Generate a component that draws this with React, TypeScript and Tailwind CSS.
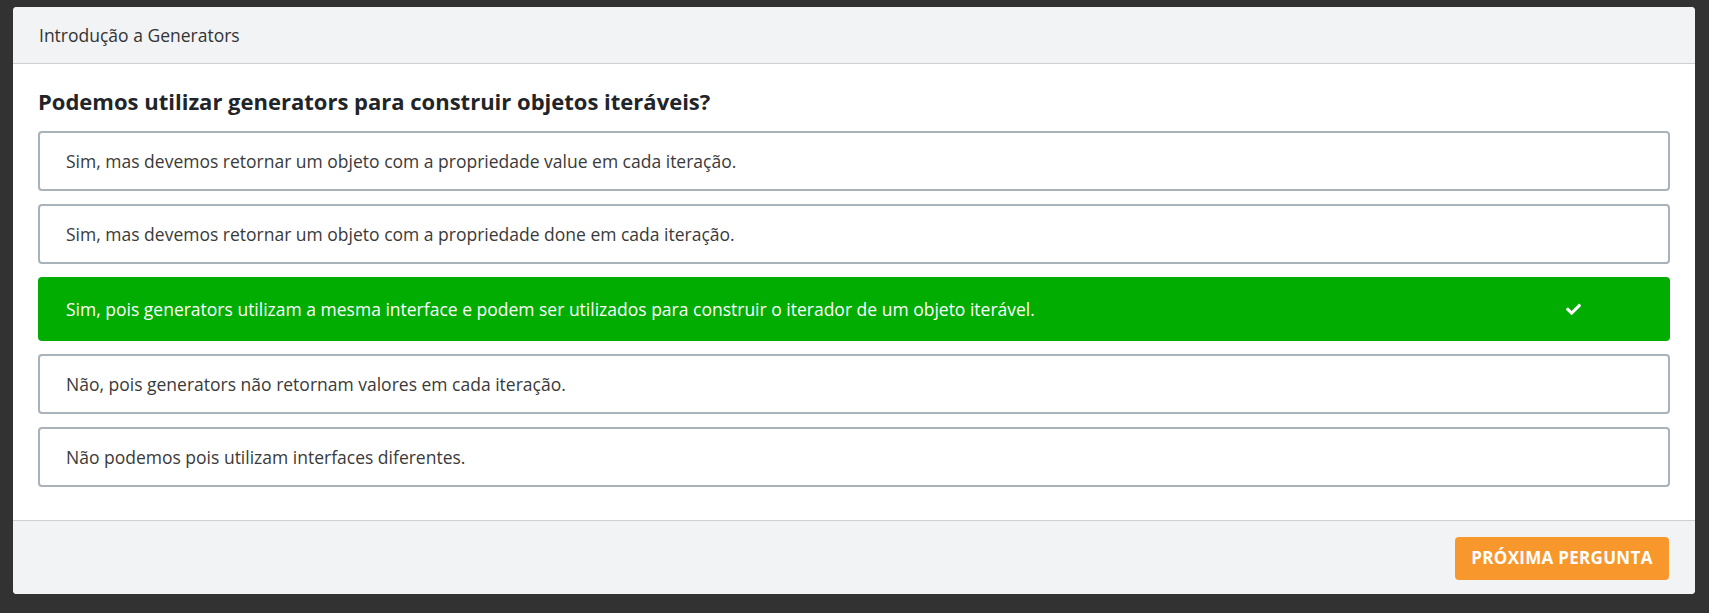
import React from "react";

const options = [
  { text: "Sim, mas devemos retornar um objeto com a propriedade value em cada iteração.", correct: false },
  { text: "Sim, mas devemos retornar um objeto com a propriedade done em cada iteração.", correct: false },
  {
    text: "Sim, pois generators utilizam a mesma interface e podem ser utilizados para construir o iterador de um objeto iterável.",
    correct: true,
  },
  { text: "Não, pois generators não retornam valores em cada iteração.", correct: false },
  { text: "Não podemos pois utilizam interfaces diferentes.", correct: false },
];

function Check() {
  return (
    <svg width="15" height="12" viewBox="0 0 512 410" className="block">
      <path
        fill="#fff"
        d="M173.9 401.5L7.5 235.1c-10-10-10-26.2 0-36.2l36.2-36.2c10-10 26.2-10 36.2 0L192 274.8 432.1 34.7c10-10 26.2-10 36.2 0l36.2 36.2c10 10 10 26.2 0 36.2L210.1 401.5c-10 10-26.2 10-36.2 0z"
      />
    </svg>
  );
}

export default function App() {
  return (
    <div
      className="min-h-[613px] bg-[#323232] pt-[7px] pl-[13px] pr-[14px] pb-[19px]"
      style={{ fontFamily: '"Open Sans", "Noto Sans", sans-serif' }}
    >
      <div className="bg-white rounded-[4px] overflow-hidden">
        <div className="h-[57px] flex items-center px-[26px] bg-[#f2f3f5] border-b border-[#cdd1d6] text-[17.5px] text-[#333]">
          Introdução a Generators
        </div>
        <div className="px-[25px] pt-[21px] pb-[33px]">
          <h2 className="text-[22px] leading-[33px] font-bold text-[#212529] mb-[13px]">
            Podemos utilizar generators para construir objetos iteráveis?
          </h2>
          <div className="flex flex-col gap-[13px]">
            {options.map((o, i) =>
              o.correct ? (
                <div
                  key={i}
                  className="h-[64px] rounded-[4px] bg-[#00ad00] flex items-center pl-[28px] pr-[89px] text-white text-[17.5px]"
                >
                  <span className="flex-1">{o.text}</span>
                  <Check />
                </div>
              ) : (
                <div
                  key={i}
                  className="h-[60px] rounded-[4px] border-2 border-[#a9b1b9] bg-white flex items-center pl-[26px] text-[#3a3a3a] text-[17.5px]"
                >
                  {o.text}
                </div>
              )
            )}
          </div>
        </div>
        <div className="h-[74px] border-t border-[#cdd1d6] bg-[#f2f3f5] flex items-center justify-end pr-[26px] pt-[1px]">
          <button className="h-[43px] w-[214px] rounded-[4px] bg-[#f8982c] text-white font-bold text-[17px] tracking-[0.3px]">
            PRÓXIMA PERGUNTA
          </button>
        </div>
      </div>
    </div>
  );
}
